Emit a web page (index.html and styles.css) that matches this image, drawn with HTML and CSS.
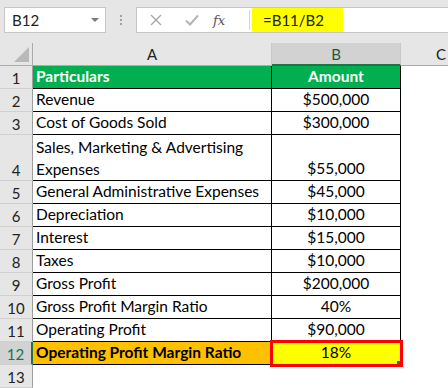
FILE: index.html
```html
<!DOCTYPE html>
<html>
<head>
<meta charset="utf-8">
<link rel="stylesheet" href="styles.css">
</head>
<body>
<div class="toolbar">
  <div class="namebox"><span class="nb-text">B12</span><span class="nb-arrow"></span></div>
  <div class="dots"><i></i><i></i><i></i></div>
  <div class="fbox">
    <div class="ficons">
      <svg class="ic-x" width="14" height="14" viewBox="0 0 14 14"><path d="M2 2L12 12M12 2L2 12" stroke="#a6a6a6" stroke-width="1.4" fill="none"/></svg>
      <svg class="ic-ok" width="16" height="14" viewBox="0 0 16 14"><path d="M2 7.5L6 11.5L14 2.5" stroke="#b4b4b4" stroke-width="2" fill="none"/></svg>
      <span class="fx">fx</span>
    </div>
    <div class="fsep"></div>
    <div class="ftext"><span class="hl">=B11/B2</span></div>
  </div>
</div>
<div class="sheet">
  <div class="corner"><span class="tri"></span></div>
  <div class="colh">A</div>
  <div class="colh sel">B</div>
  <div class="colh last">C</div>

  <div class="rh">1</div><div class="c a hdr">Particulars</div><div class="c b hdr">Amount</div><div class="e"></div>
  <div class="rh">2</div><div class="c a">Revenue</div><div class="c b">$500,000</div><div class="e"></div>
  <div class="rh">3</div><div class="c a">Cost of Goods Sold</div><div class="c b">$300,000</div><div class="e"></div>
  <div class="rh tall">4</div><div class="c a tall">Sales, Marketing &amp; Advertising<br>Expenses</div><div class="c b tall">$55,000</div><div class="e tall"></div>
  <div class="rh">5</div><div class="c a">General Administrative Expenses</div><div class="c b">$45,000</div><div class="e"></div>
  <div class="rh">6</div><div class="c a">Depreciation</div><div class="c b">$10,000</div><div class="e"></div>
  <div class="rh">7</div><div class="c a">Interest</div><div class="c b">$15,000</div><div class="e"></div>
  <div class="rh">8</div><div class="c a">Taxes</div><div class="c b">$10,000</div><div class="e"></div>
  <div class="rh">9</div><div class="c a">Gross Profit</div><div class="c b">$200,000</div><div class="e"></div>
  <div class="rh">10</div><div class="c a">Gross Profit Margin Ratio</div><div class="c b">40%</div><div class="e"></div>
  <div class="rh">11</div><div class="c a">Operating Profit</div><div class="c b">$90,000</div><div class="e"></div>
  <div class="rh selrow">12</div><div class="c a orange">Operating Profit Margin Ratio</div><div class="c b yellow">18%<span class="handle"></span></div><div class="e"></div>
  <div class="rh">13</div><div class="e"></div><div class="e"></div><div class="e"></div>
</div>
</body>
</html>
```
FILE: styles.css
```css
* { box-sizing: border-box; }
html, body { margin: 0; padding: 0; }
body {
  width: 448px;
  height: 388px;
  overflow: hidden;
  background: #fff;
  font-family: Lato, "Open Sans", sans-serif;
  font-size: 15px;
  color: #000;
}
.toolbar {
  height: 43px;
  background: #e6e6e6;
  display: flex;
  align-items: flex-start;
  padding-top: 7px;
  padding-left: 4px;
}
.namebox {
  width: 102px;
  height: 26px;
  background: #fff;
  border: 1px solid #c6c6c6;
  display: flex;
  align-items: center;
  justify-content: space-between;
  padding: 0 6px 0 7px;
}
.nb-text { font-size: 15px; color: #222; }
.nb-arrow {
  width: 0; height: 0;
  border-left: 4px solid transparent;
  border-right: 4px solid transparent;
  border-top: 4px solid #7a7a7a;
}
.dots {
  width: 30px;
  height: 26px;
  display: flex;
  flex-direction: column;
  align-items: center;
  justify-content: center;
  gap: 2px;
}
.dots i { display: block; width: 2px; height: 2px; background: #a0a0a0; }
.fbox {
  flex: 1;
  height: 26px;
  background: #fff;
  border: 1px solid #c6c6c6;
  border-right: none;
  display: flex;
  align-items: stretch;
}
.ficons {
  width: 112px;
  display: flex;
  align-items: center;
  padding-left: 12px;
}
.ic-x { margin-right: 21px; }
.ic-ok { margin-right: 13px; }
.fx {
  font-family: "DejaVu Serif", "Liberation Serif", serif;
  font-style: italic;
  font-size: 13px;
  color: #555;
}
.fsep { width: 1px; background: #d4d4d4; margin: 2px 0; }
.ftext { display: flex; align-items: stretch; padding-left: 2px; }
.hl {
  background: #ffff00;
  padding: 0 19px 0 11px;
  display: flex;
  align-items: center;
  font-size: 15px;
  color: #222;
}
.sheet {
  display: grid;
  grid-template-columns: 33px 239px 129px 47px;
  grid-auto-rows: 23px;
}
.corner {
  background: #e6e6e6;
  border-right: 1px solid #ababab;
  border-bottom: 1px solid #ababab;
  position: relative;
  height: 23px;
}
.tri {
  position: absolute;
  right: 3px;
  bottom: 3px;
  width: 0; height: 0;
  border-left: 15px solid transparent;
  border-bottom: 15px solid #b9b9b9;
}
.colh {
  background: #e6e6e6;
  border-right: 1px solid #c8c8c8;
  border-bottom: 1px solid #ababab;
  display: flex;
  align-items: center;
  justify-content: center;
  font-size: 15px;
  color: #222;
}
.colh.sel {
  background: #d2d2d2;
  border-bottom: 2px solid #217346;
  color: #1a5a36;
}
.colh.last { justify-content: flex-end; padding-right: 2px; border-right: none; }
.rh {
  background: #e6e6e6;
  border-right: 1px solid #9e9e9e;
  border-bottom: 1px solid #d0d0d0;
  display: flex;
  align-items: flex-end;
  justify-content: center;
  padding-bottom: 1px;
  font-size: 15px;
  color: #222;
}
.rh.selrow {
  background: #d2d2d2;
  color: #217346;
  border-right: 2px solid #217346;
}
.tall { grid-row: span 2; }
.c {
  border-right: 1px solid #000;
  border-bottom: 1px solid #000;
  display: flex;
  align-items: flex-end;
  padding-bottom: 1px;
  white-space: nowrap;
  line-height: 22px;
  font-size: 15.5px;
}
.c.a { padding-left: 3px; }
.c.b { justify-content: center; }
.c.a.tall { display: block; padding-top: 1px; line-height: 22px; }
.c.b.tall { align-items: flex-end; }
.hdr {
  background: #00b050;
  color: #fff;
  font-weight: bold;
}
.orange { background: #ffc000; font-weight: bold; }
.yellow {
  background: #ffff00;
  position: relative;
  z-index: 1;
  outline: 3px solid #ff0000;
  outline-offset: -1px;
}
.handle {
  position: absolute;
  right: 0;
  bottom: 0;
  width: 3px;
  height: 3px;
  background: #217346;
}
.e { background: #fff; }
```
